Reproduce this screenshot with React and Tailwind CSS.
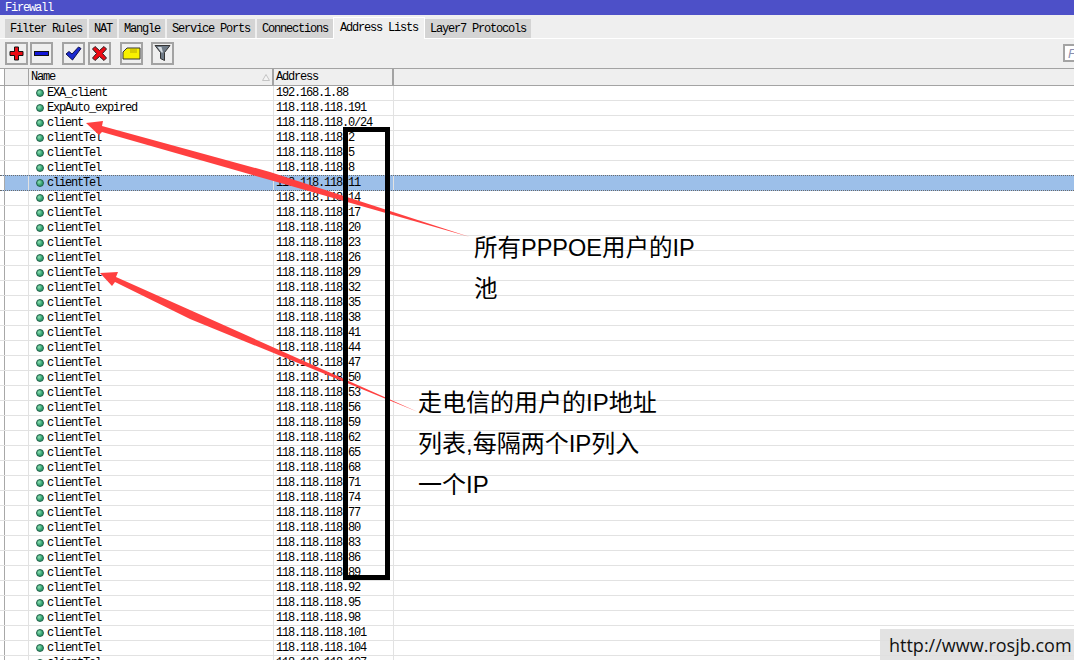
const tabs = [
  "Filter Rules",
  "NAT",
  "Mangle",
  "Service Ports",
  "Connections",
  "Address Lists",
  "Layer7 Protocols",
];

const rows = [
  { name: "EXA_client", address: "192.168.1.88" },
  { name: "ExpAuto_expired", address: "118.118.118.191" },
  { name: "client", address: "118.118.118.0/24" },
];
for (let i = 2; i <= 107; i += 3) {
  rows.push({ name: "clientTel", address: `118.118.118.${i}` });
}

function ToolButton({ children, className }) {
  return (
    <button
      className={`flex h-[23px] w-[23px] items-center justify-center border-2 border-[#a3a3a3] bg-[#efefef] ${className || ""}`}
    >
      {children}
    </button>
  );
}

function StatusDot() {
  return (
    <span className="h-[8px] w-[8px] shrink-0 rounded-full border border-[#1f5f46] bg-[radial-gradient(circle_at_35%_35%,#8fe0b4,#2f9e6e_60%)]" />
  );
}

function Row({ row, selected }) {
  return (
    <div
      className={
        selected
          ? "-mt-px flex h-[16px] border-y border-dotted border-[#6b6b6b] bg-[#9cbfe9]"
          : "flex h-[15px] border-b border-[#e2e2e2]"
      }
    >
      <div className="w-[5px] shrink-0 border-r border-[#a8a8a8] bg-white" />
      <div className="w-[24px] shrink-0 border-r border-[#e2e2e2]" />
      <div className="flex w-[245px] shrink-0 items-center gap-[3px] border-r border-[#e2e2e2] pl-[7px]">
        <StatusDot />
        <span>{row.name}</span>
      </div>
      <div className="flex w-[120px] shrink-0 items-center border-r border-[#e2e2e2] pl-[2px]">
        {row.address}
      </div>
    </div>
  );
}

export default function App() {
  return (
    <div className="relative h-[660px] w-[1074px] overflow-hidden bg-white font-['Liberation_Mono',monospace] text-[12px] leading-none tracking-[-1.2px] text-black">
      <div className="flex h-[15px] items-center bg-[#4d50c8] pl-[5px] text-white">
        Firewall
      </div>

      <div className="flex h-[24px] items-end gap-[2px] border-b border-white bg-[#efefef] pl-[5px]">
        {tabs.map((tab) =>
          tab === "Address Lists" ? (
            <div
              key={tab}
              className="-mb-px -ml-[2px] -mr-[2px] flex h-[22px] items-center border-x border-t border-white bg-[#efefef] px-[6px] pb-[2px]"
            >
              {tab}
            </div>
          ) : (
            <div
              key={tab}
              className="flex h-[19px] items-center bg-[#d4d4d4] px-[5px]"
            >
              {tab}
            </div>
          ),
        )}
      </div>

      <div className="flex h-[29px] items-center bg-[#efefef] pl-[5px] pb-[1px]">
        <ToolButton>
          <svg width="17" height="17" viewBox="0 0 17 17">
            <path d="M6.500 2h4v4.500H15v4h-4.500V15h-4v-4.500H2v-4h4.500z" fill="#ee0a14" stroke="#111" />
          </svg>
        </ToolButton>
        <ToolButton className="ml-[2px]">
          <svg width="17" height="17" viewBox="0 0 17 17">
            <rect x="1.500" y="6.500" width="14" height="4" fill="#1216d8" stroke="#111" />
          </svg>
        </ToolButton>
        <ToolButton className="ml-[9px]">
          <svg width="17" height="17" viewBox="0 0 17 17">
            <path d="M1 9l3-2.500 3 2.500 6.500-7 2.500 1.500-8.500 11.500z" fill="#1a2ad0" stroke="#10104a" />
          </svg>
        </ToolButton>
        <ToolButton className="ml-[3px]">
          <svg width="17" height="17" viewBox="0 0 17 17">
            <path d="M1.500 4L4 1.500l4.500 4 4.500-4L15.500 4 11.500 8.500l4 4.500-2.500 2.500-4.500-4-4.500 4L1.500 13l4-4.500z" fill="#ee0a14" stroke="#222" />
          </svg>
        </ToolButton>
        <ToolButton className="ml-[9px]">
          <svg width="19" height="17" viewBox="0 0 19 17">
            <path d="M1 7l4-4h13v11H1z" fill="#f8f000" stroke="#333" />
            <path d="M8 5h7M8 7h7" stroke="#b8a800" />
          </svg>
        </ToolButton>
        <ToolButton className="ml-[8px]">
          <svg width="17" height="18" viewBox="0 0 17 18">
            <path d="M1 1.500h15l-5.500 7v8l-4-2v-6z" fill="#6f7a86" stroke="#333" />
            <path d="M3.500 3h4l1.500 5.500H7.500z" fill="#d5dce2" />
          </svg>
        </ToolButton>
        <div className="ml-auto flex h-[18px] w-[11px] items-center border-y-2 border-l-2 border-[#a3a3a3] bg-white pl-[3px] font-['Liberation_Sans',sans-serif] text-[13px] italic text-[#8a8fb0]">
          F
        </div>
      </div>

      <div className="flex h-[18px] border-y border-[#a3a3a3] bg-[#efefef]">
        <div className="w-[5px] shrink-0 border-r border-[#a3a3a3] bg-white" />
        <div className="w-[24px] shrink-0 border-r border-[#a3a3a3]" />
        <div className="flex w-[245px] shrink-0 items-center justify-between border-r-2 border-[#a3a3a3] pl-[2px] pr-[2px]">
          <span>Name</span>
          <svg width="8" height="7" viewBox="0 0 8 7">
            <path d="M4 .5L7.500 6.500H.5z" fill="#f4f4f4" stroke="#c4c4c4" />
          </svg>
        </div>
        <div className="flex w-[120px] shrink-0 items-center border-r-2 border-[#a3a3a3] pl-[2px]">
          Address
        </div>
      </div>

      <div>
        {rows.map((row) => (
          <Row
            key={row.address}
            row={row}
            selected={row.address === "118.118.118.11"}
          />
        ))}
      </div>

      {/* annotations drawn on top of the screenshot */}
      <svg
        className="pointer-events-none absolute left-0 top-0"
        width="1074"
        height="660"
      >
        <polygon
          points="86,123 103,121 102,126 270,172 470,237 270,180 102,132 99,135"
          fill="#ff4040"
        />
        <polygon
          points="100,273 118,272 116,277 190,310 418,412 190,319 115,282 112,286"
          fill="#ff4040"
        />
      </svg>
      <div className="absolute left-[343px] top-[127px] h-[453px] w-[47px] border-[5px] border-black" />

      <div className="absolute left-[474px] top-[228px] font-['Liberation_Sans','Noto_Sans_CJK_SC',sans-serif] text-[23.500px] leading-[41px] tracking-normal">
        <div>所有PPPOE用户的IP</div>
        <div>池</div>
      </div>
      <div className="absolute left-[418px] top-[382px] font-['Liberation_Sans','Noto_Sans_CJK_SC',sans-serif] text-[24px] leading-[41px] tracking-normal">
        <div>走电信的用户的IP地址</div>
        <div>列表,每隔两个IP列入</div>
        <div>一个IP</div>
      </div>

      <div className="absolute bottom-0 right-0 flex h-[31px] w-[194px] items-center bg-[#e0e0e0]/90 pl-[9px] font-['Open_Sans',sans-serif] text-[18px] tracking-normal text-[#111]">
        http://www.rosjb.com
      </div>
    </div>
  );
}
